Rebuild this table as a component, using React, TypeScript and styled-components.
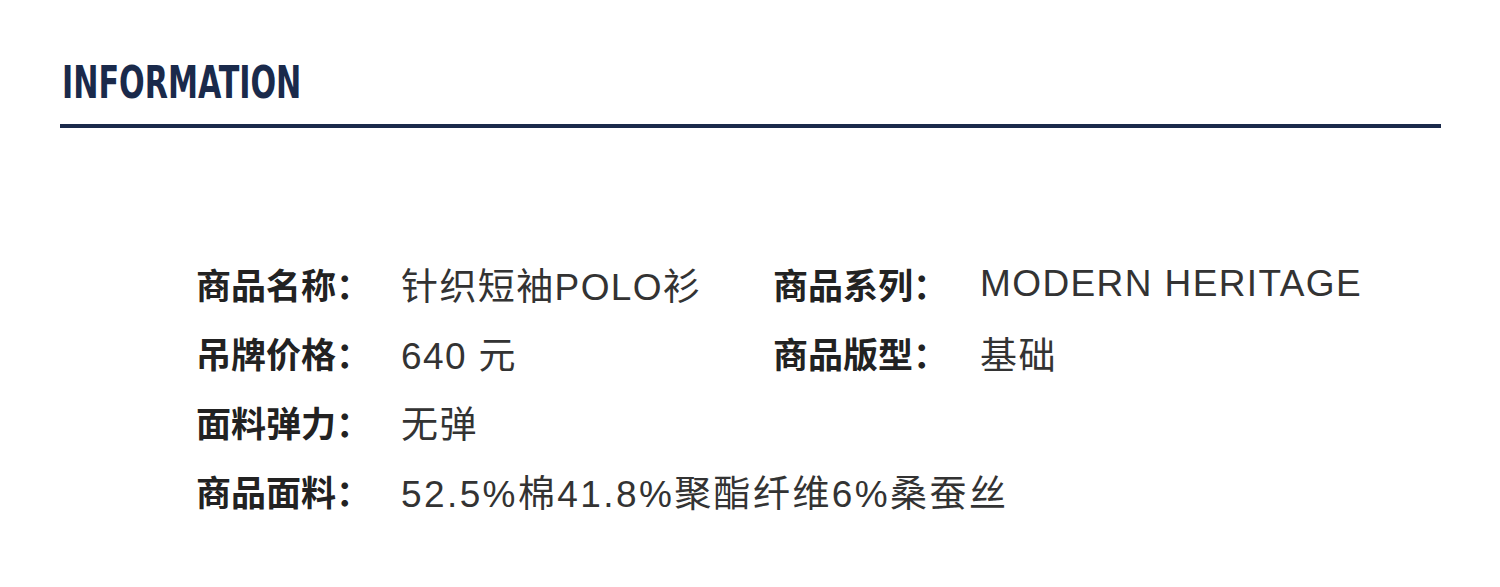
import styled, { createGlobalStyle } from 'styled-components'

const GlobalStyle = createGlobalStyle`
	html, body {
		margin: 0;
		padding: 0;
		background: #fff;
	}
	body {
		font-family: 'Liberation Sans', 'Noto Sans CJK SC', sans-serif;
	}
`

const Page = styled.div`
	width: 1500px;
	height: 587px;
	padding: 58px 59px 0 60px;
	box-sizing: border-box;
	background: #fff;
`

const Header = styled.header`
	border-bottom: 4px solid #1a2a4b;
	padding-bottom: 16px;
`

const Title = styled.h2`
	margin: 0 0 0 2px;
	font-family: 'Liberation Sans Narrow', 'DejaVu Sans Condensed', 'Liberation Sans', sans-serif;
	font-stretch: condensed;
	font-weight: 700;
	font-size: 45px;
	line-height: 50px;
	color: #1a2a4b;
	transform: scaleX(0.745);
	transform-origin: left center;
`

const InfoGrid = styled.dl`
	display: grid;
	grid-template-columns: 205px 372px 207px auto;
	grid-auto-rows: 69px;
	align-items: center;
	margin: 121px 0 0 136px;
`

const Label = styled.dt`
	margin: 0;
	font-family: 'Noto Sans CJK SC', sans-serif;
	font-weight: 700;
	font-size: 35px;
	color: #222;
	white-space: nowrap;
`

const Value = styled.dd<{ $wide?: boolean }>`
	margin: 0;
	font-family: 'Liberation Sans', 'Noto Sans CJK SC', sans-serif;
	font-size: 37px;
	color: #333;
	white-space: nowrap;
	letter-spacing: ${(p) => (p.$wide ? '2.4px' : '1.4px')};
	${(p) => p.$wide && 'grid-column: 2 / span 3;'}
`

const rows: [string, string, string?, string?][] = [
	['商品名称：', '针织短袖POLO衫', '商品系列：', 'MODERN HERITAGE'],
	['吊牌价格：', '640 元', '商品版型：', '基础'],
	['面料弹力：', '无弹'],
]

const App = () => {
	return (
		<>
			<GlobalStyle />
			<Page>
				<Header>
					<Title>INFORMATION</Title>
				</Header>
				<InfoGrid>
					{rows.map(([l1, v1, l2, v2]) => [
						<Label key={l1}>{l1}</Label>,
						<Value key={v1}>{v1}</Value>,
						l2 ? <Label key={l2}>{l2}</Label> : <span key={l1 + 'x'} />,
						v2 ? <Value key={v2}>{v2}</Value> : <span key={l1 + 'y'} />,
					])}
					<Label>商品面料：</Label>
					<Value $wide>52.5%棉41.8%聚酯纤维6%桑蚕丝</Value>
				</InfoGrid>
			</Page>
		</>
	)
}

export default App
